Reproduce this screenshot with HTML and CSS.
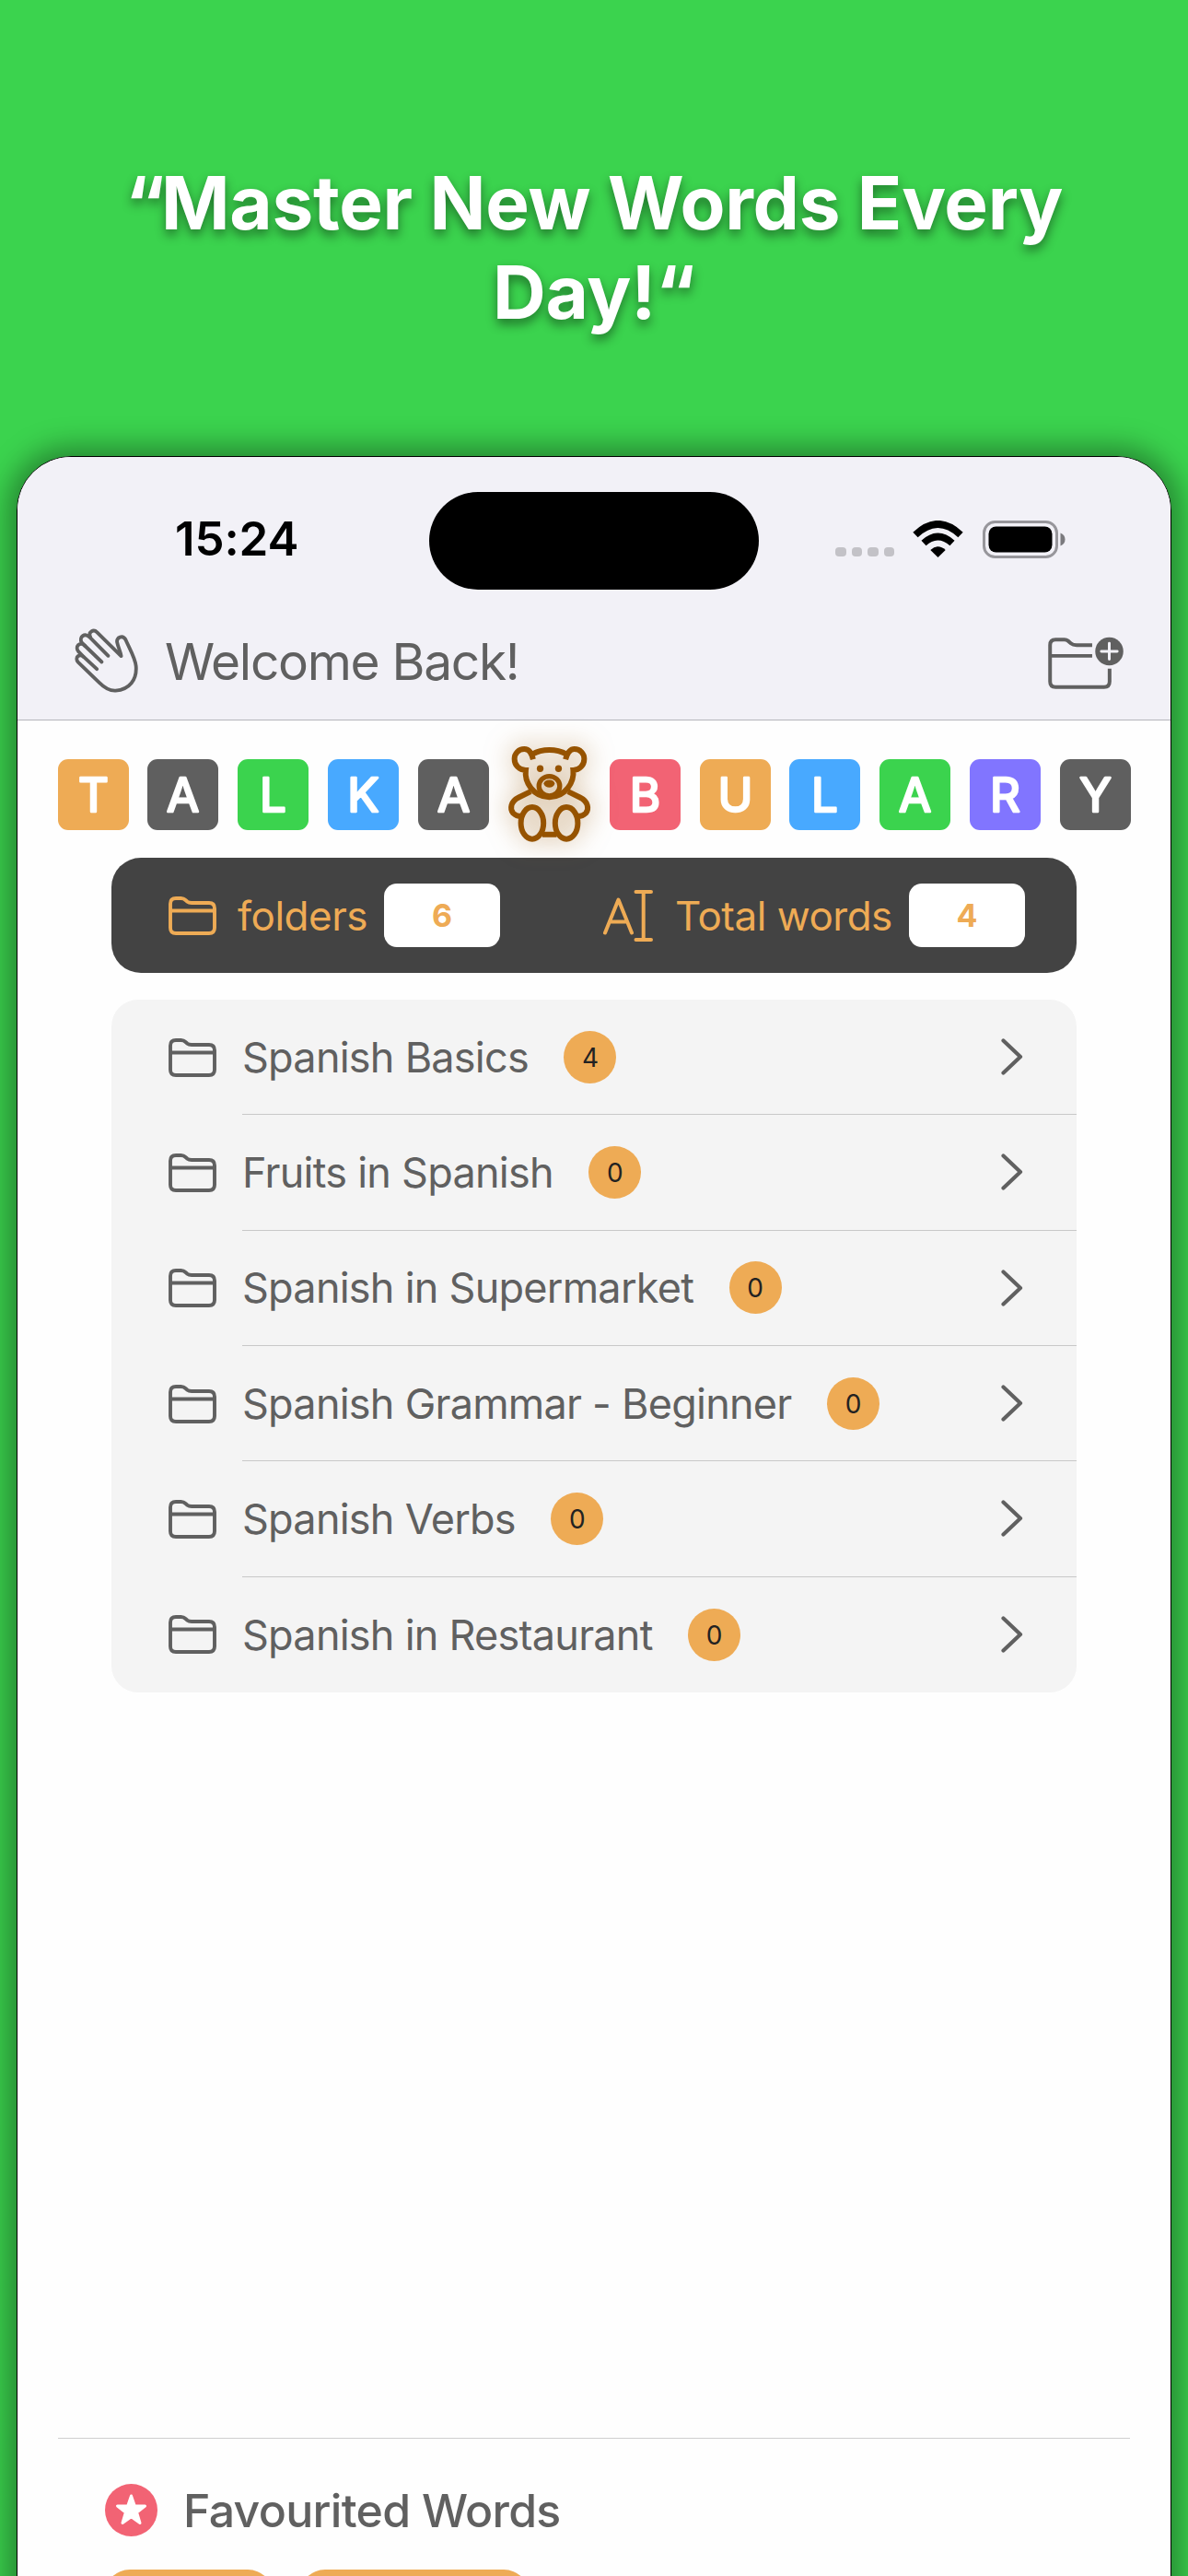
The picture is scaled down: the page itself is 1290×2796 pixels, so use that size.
FILE: index.html
```html
<!DOCTYPE html>
<html lang="en">
<head>
<meta charset="utf-8">
<title>Talkabulary</title>
<link rel="stylesheet" href="styles.css">
</head>
<body>
<svg class="defs" aria-hidden="true">
  <symbol id="folder" viewBox="0 0 52 42">
    <path d="M2 34V8Q2 2 8 2H13.500Q16.500 2 18.500 4L20.500 5.800Q22 7 25 7H44Q50 7 50 13V34Q50 40 44 40H8Q2 40 2 34ZM2 15.500H50" fill="none" stroke="currentColor" stroke-width="3.900" stroke-linejoin="round"/>
  </symbol>
  <symbol id="chevron" viewBox="0 0 24 40">
    <path d="M2.500 2.500L21 20L2.500 37.500" fill="none" stroke="currentColor" stroke-width="4.200" stroke-linecap="round" stroke-linejoin="round"/>
  </symbol>
</svg>

<h1 class="headline"><span class="tight">“</span>Master New Words Every Day!“</h1>

<main class="phone">
  <header class="top">
    <div class="status">
      <span class="time">15:24</span>
      <span class="island"></span>
      <span class="signals">
        <span class="dots"><i></i><i></i><i></i><i></i></span>
        <svg class="wifi" viewBox="0 0 55 40">
          <path d="M3 15.500Q27.500 -7.500 52 15.500" fill="none" stroke="#000" stroke-width="7.800"/>
          <path d="M12 24.500Q27.500 10.500 43 24.500" fill="none" stroke="#000" stroke-width="7.600"/>
          <path d="M19.300 32Q27.500 24.500 35.700 32L27.500 40Z"/>
        </svg>
        <svg class="battery" viewBox="0 0 90 41">
          <rect x="1.500" y="1.500" width="79" height="38" rx="12" fill="none" stroke="#97969b" stroke-width="3"/>
          <rect x="6.500" y="6.500" width="69" height="28" rx="8"/>
          <path d="M84.500 13.500Q89.500 15.500 89.500 20.500T84.500 27.500Z" fill="#7b7a7e"/>
        </svg>
      </span>
    </div>
    <div class="nav">
      <svg class="hand" viewBox="30 35 212 215">
        <g fill="none" stroke="#606060" stroke-width="11.500" stroke-linecap="round" stroke-linejoin="round">
          <path d="M105 170L63 131C49 117 32 133 44 147L112 213C132 233 150 241 166 240C210 237 236 205 232 160C230 136 213 107 199 76C190 58 167 66 171 84C175 103 183 116 184 128L106 51C94 39 76 50 84 66"/>
          <path d="M121 147L66 94C50 79 32 98 46 114L62 130"/>
          <path d="M142 127L82 67C67 50 46 66 56 84L67 95"/>
        </g>
      </svg>
      <span class="welcome">Welcome Back!</span>
      <svg class="add" viewBox="24 38 246 172">
        <path d="M168 66H117Q105 66 98 60L89 52Q84 48 77 48H48Q30 48 30 66V185Q30 203 48 203H207Q225 203 225 185V143M30 101H168" fill="none" stroke="#606060" stroke-width="12"/>
        <circle cx="224" cy="86" r="46" fill="#606060"/>
        <path d="M224 60V112M198 86H250" stroke="#f2f1f7" stroke-width="9" stroke-linecap="round"/>
      </svg>
    </div>
  </header>

  <div class="logo">
    <svg class="tile orange" viewBox="0 0 77 77"><text x="38.500" y="57">T</text></svg>
    <svg class="tile grey" viewBox="0 0 77 77"><text x="38.500" y="57">A</text></svg>
    <svg class="tile green" viewBox="0 0 77 77"><text x="38.500" y="57">L</text></svg>
    <svg class="tile blue" viewBox="0 0 77 77"><text x="38.500" y="57">K</text></svg>
    <svg class="tile grey" viewBox="0 0 77 77"><text x="38.500" y="57">A</text></svg>
    <svg class="bear" viewBox="65 57 268 316">
      <g fill="none" stroke="#965300" stroke-width="18">
        <path d="M146 103C140 80 133 69 117 69C98 69 85 84 85 101C85 121 100 138 122 138C117 177 146 226 199 226C252 226 281 177 277 138C298 138 313 121 313 101C313 84 300 69 281 69C266 69 258 80 252 103"/>
        <path d="M143 86Q168 72 199 72T256 86"/>
        <path d="M138 208L99 227C72 240 69 265 81 279Q91 289 107 289M260 208L299 227C326 240 330 265 318 279Q308 289 292 289M176 348H223"/>
        <ellipse cx="143" cy="311" rx="37" ry="52"/>
        <ellipse cx="255" cy="311" rx="37" ry="52"/>
        <ellipse cx="199" cy="190" rx="34" ry="32" stroke-width="16"/>
      </g>
      <g fill="#965300"><circle cx="169" cy="133" r="11"/><circle cx="229" cy="133" r="11"/>
      <path d="M180 182Q184 170 199 170T217 182Q212 195 199 195T180 182Z"/></g>
    </svg>
    <svg class="tile pink" viewBox="0 0 77 77"><text x="38.500" y="57">B</text></svg>
    <svg class="tile orange" viewBox="0 0 77 77"><text x="38.500" y="57">U</text></svg>
    <svg class="tile blue" viewBox="0 0 77 77"><text x="38.500" y="57">L</text></svg>
    <svg class="tile green" viewBox="0 0 77 77"><text x="38.500" y="57">A</text></svg>
    <svg class="tile purple" viewBox="0 0 77 77"><text x="38.500" y="57">R</text></svg>
    <svg class="tile grey" viewBox="0 0 77 77"><text x="38.500" y="57">Y</text></svg>
  </div>

  <section class="stats">
    <svg class="folder"><use href="#folder"/></svg>
    <span class="label label-folders">folders</span>
    <span class="value">6</span>
    <svg class="cursor" viewBox="0 0 54 56">
      <g fill="none" stroke="currentColor" stroke-width="4" stroke-linecap="round" stroke-linejoin="round">
        <path d="M2 46.500L16.500 10.500L31 46.500M7 34.500H26"/>
        <path d="M35.500 2H52M35.500 54H52M43.700 2V54"/>
      </g>
    </svg>
    <span class="label label-words">Total words</span>
    <span class="value">4</span>
  </section>

  <ul class="list">
    <li><svg class="folder"><use href="#folder"/></svg><div class="row"><span class="name">Spanish Basics</span><span class="badge">4</span><svg class="chevron"><use href="#chevron"/></svg></div></li>
    <li><svg class="folder"><use href="#folder"/></svg><div class="row"><span class="name">Fruits in Spanish</span><span class="badge">0</span><svg class="chevron"><use href="#chevron"/></svg></div></li>
    <li><svg class="folder"><use href="#folder"/></svg><div class="row"><span class="name">Spanish in Supermarket</span><span class="badge">0</span><svg class="chevron"><use href="#chevron"/></svg></div></li>
    <li><svg class="folder"><use href="#folder"/></svg><div class="row"><span class="name">Spanish Grammar - Beginner</span><span class="badge">0</span><svg class="chevron"><use href="#chevron"/></svg></div></li>
    <li><svg class="folder"><use href="#folder"/></svg><div class="row"><span class="name">Spanish Verbs</span><span class="badge">0</span><svg class="chevron"><use href="#chevron"/></svg></div></li>
    <li><svg class="folder"><use href="#folder"/></svg><div class="row"><span class="name">Spanish in Restaurant</span><span class="badge">0</span><svg class="chevron"><use href="#chevron"/></svg></div></li>
  </ul>

  <section class="favourites">
    <div class="fav-head">
      <svg class="star" viewBox="0 0 57 57">
        <circle cx="28.500" cy="28.500" r="28.500" fill="#f26374"/>
        <path d="M28.500 13L32.300 24H43.500L34.600 31L38 42.500L28.500 35.700L19 42.500L22.400 31L13.500 24H24.700Z" fill="#fff" stroke="#fff" stroke-width="3" stroke-linejoin="round"/>
      </svg>
      <span class="fav-title">Favourited Words</span>
    </div>
    <div class="chips"><span class="chip chip-short"></span><span class="chip chip-long"></span></div>
  </section>
</main>
</body>
</html>
```
FILE: styles.css
```css
* { box-sizing: border-box; }
html { height: 2796px; overflow: hidden; }
body {
  margin: 0;
  width: 1290px;
  height: 2796px;
  overflow: hidden;
  display: flex;
  flex-direction: column;
  align-items: center;
  background: #3bd34e;
  font-family: Inter, "Liberation Sans", sans-serif;
  color: #606060;
  white-space: nowrap;
}
svg { display: block; flex: none; }
.defs { display: none; }

.headline {
  margin: 0;
  height: 495px;
  width: 1100px;
  padding-top: 171px;
  flex: none;
  white-space: normal;
  text-align: center;
  font-size: 80px;
  line-height: 97px;
  font-weight: 700;
  letter-spacing: -0.3px;
  color: #fff;
  text-shadow: 0 6px 12px rgba(0, 0, 0, 0.45);
}
.tight { letter-spacing: -4px; }

.phone {
  width: 1254px;
  height: 2400px;
  flex: none;
  display: flex;
  flex-direction: column;
  border: 1px solid #000;
  border-radius: 59px;
  overflow: hidden;
  background: #fefefe;
  box-shadow: 0 0 30px 10px rgba(0, 0, 0, 0.36);
}

.top {
  height: 286px;
  flex: none;
  background: #f2f1f7;
  border-bottom: 1px solid #b5b5bb;
}
.status {
  display: grid;
  grid-template-columns: 447px 358px 1fr;
  align-items: center;
  height: 144px;
  padding-top: 38px;
}
.time {
  justify-self: start;
  margin-left: 171px;
  margin-top: -4px;
  font-size: 51px;
  font-weight: 600;
  letter-spacing: -0.1px;
  line-height: 60px;
  color: #000;
}
.island { height: 106px; border-radius: 53px; background: #000; }
.signals { display: flex; align-items: center; margin: -4px 0 0 83px; }
.dots { display: flex; gap: 6px; margin: 28px 20px 0 0; }
.dots i { width: 11.5px; height: 10px; border-radius: 4px; background: #c3c2c7; }
.wifi { width: 55px; height: 40px; margin-right: 21px; }
.battery { width: 90px; height: 41px; }

.nav { display: flex; align-items: center; height: 142px; padding: 17px 51px 0 61px; }
.hand { width: 71px; height: 72px; margin-top: -5px; }
.welcome { margin-left: 28px; font-size: 55px; line-height: 66px; letter-spacing: -1.3px; margin-top: -4px; }
.add { width: 82px; height: 57px; margin: 0 0 0 auto; }

.logo {
  display: flex;
  align-items: center;
  justify-content: space-between;
  height: 149px;
  flex: none;
  padding: 12px 43px 0 43.5px;
}
.tile { width: 77px; height: 77px; border-radius: 11px; margin-top: -1px; }
.tile text {
  font-size: 51px;
  font-weight: 400;
  text-anchor: middle;
  fill: #fff;
  stroke: #fff;
  stroke-width: 2.6px;
  stroke-linejoin: round;
}
.orange { background: #eeab55; }
.grey { background: #5f5f5f; }
.green { background: #3bd34e; }
.blue { background: #48a9ff; }
.pink { background: #f26374; }
.purple { background: #8175ff; }
.bear {
  width: 89px;
  height: 105px;
  margin-top: -2px;
  overflow: visible;
  filter: drop-shadow(0 0 14px rgba(150, 83, 0, 0.55));
}

.stats {
  display: flex;
  align-items: center;
  width: 1048px;
  height: 125px;
  flex: none;
  margin-left: 102px;
  padding: 0 56px 0 62px;
  border-radius: 32px;
  background: #434343;
  color: #eeab55;
}
.folder { width: 52px; height: 42px; }
.label { font-size: 44px; line-height: 54px; margin-left: 23px; }
.label-folders { width: 141px; letter-spacing: -0.5px; }
.label-words { width: 236px; margin-left: 24px; letter-spacing: -0.5px; }
.value {
  width: 126px;
  height: 69px;
  margin-left: 18px;
  border-radius: 14px;
  background: #fff;
  font-size: 34px;
  font-weight: 700;
  line-height: 69px;
  text-align: center;
}
.cursor { width: 54px; height: 56px; margin-left: auto; }

.list {
  list-style: none;
  margin: 29px 0 0 102px;
  padding: 0;
  width: 1048px;
  height: 752px;
  flex: none;
  display: grid;
  grid-template-rows: repeat(6, 1fr);
  border-radius: 29px;
  background: #f4f4f4;
}
.list li { display: flex; align-items: center; padding-left: 62px; }
.row {
  flex: 1;
  height: 100%;
  display: flex;
  align-items: center;
  margin-left: 28px;
  padding-right: 58px;
  border-bottom: 1px solid #c8c8c8;
}
.list li:last-child .row { border-bottom: 0; }
.name { font-size: 45px; line-height: 56px; letter-spacing: -0.75px; margin-top: 1px; }
.badge {
  width: 57px;
  height: 57px;
  margin-left: 38.5px;
  border-radius: 50%;
  background: #eeab55;
  color: #222;
  font-size: 28px;
  line-height: 58px;
  text-align: center;
}
.chevron { width: 24px; height: 40px; margin-left: auto; }

.favourites {
  margin: 809px 44px 0;
  flex: none;
  border-top: 1px solid #cfcfcf;
  padding: 49px 0 0 51px;
}
.fav-head { display: flex; align-items: center; height: 57px; }
.star { width: 57px; height: 57px; }
.fav-title { margin-left: 28px; font-size: 50px; line-height: 60px; font-weight: 500; letter-spacing: -0.7px; }
.chips { display: flex; gap: 28px; margin: 36px 0 0 -1px; }
.chip { height: 80px; border-radius: 28px; background: #eeab55; }
.chip-short { width: 184px; }
.chip-long { width: 250px; }
```
